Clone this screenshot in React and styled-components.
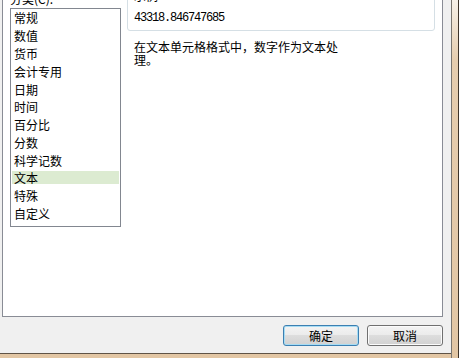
import React, { useState } from 'react'
import styled, { createGlobalStyle } from 'styled-components';

const categories = ['常规', '数值', '货币', '会计专用', '日期', '时间', '百分比', '分数', '科学记数', '文本', '特殊', '自定义'];

function App() {
  const [selected, setSelected] = useState('文本');

  return (
    <Window>
      <GlobalStyle />
      <Main>
        <TabPage>
          <LeftColumn>
            <CategoryLabel>分类(C):</CategoryLabel>
            <ListBox>
              {categories.map((cat) => (
                <Item key={cat} selected={cat === selected} onClick={() => setSelected(cat)}>{cat}</Item>
              ))}
            </ListBox>
          </LeftColumn>
          <RightColumn>
            <SampleBox>
              <SampleLabel>示例</SampleLabel>
              <SampleValue>43318.846747685</SampleValue>
            </SampleBox>
            <Description>在文本单元格格式中，数字作为文本处理。</Description>
          </RightColumn>
        </TabPage>
        <ButtonRow>
          <Button primary>确定</Button>
          <Button>取消</Button>
        </ButtonRow>
      </Main>
      <RightFrame />
      <BottomFrame />
    </Window>
  )
}

const GlobalStyle = createGlobalStyle`
 html, body{
  margin: 0;
  padding: 0;
  background: #f0f0f0;
  overflow: hidden;
 }
 body{
  font-family: "Noto Sans CJK SC", "Liberation Sans", sans-serif;
  font-size: 12px;
  color: #000;
 }
`;

const Window = styled.div`
 width: 459px;
 height: 358px;
 display: grid;
 grid-template-columns: 451px 8px;
 grid-template-rows: 353px 5px;
 overflow: hidden;
`;

const Main = styled.div`
 background: #f0f0f0;
 padding-left: 2px;
 display: flex;
 flex-direction: column;
`;

const TabPage = styled.div`
 box-sizing: border-box;
 width: 441px;
 height: 317px;
 background: #fff;
 border-left: 1px solid #898c95;
 border-right: 1px solid #898c95;
 border-bottom: 1px solid #898c95;
 padding-left: 7px;
 display: flex;
 overflow: hidden;
`;

const LeftColumn = styled.div`
 display: flex;
 flex-direction: column;
`;

const CategoryLabel = styled.div`
 height: 12px;
 line-height: 12px;
 margin-top: -7px;
 margin-bottom: 3px;
`;

const ListBox = styled.div`
 box-sizing: border-box;
 width: 111px;
 height: 219px;
 border: 1px solid #828790;
 display: flex;
 flex-direction: column;
`;

const Item = styled.div`
 height: 13px;
 line-height: 13px;
 padding: 2.4px 0;
 margin: 0 1px;
 text-indent: 2px;
 background: ${(p) => (p.selected ? '#dcebd1' : 'transparent')};
 background-clip: content-box;
 cursor: default;
`;

const RightColumn = styled.div`
 margin-left: 6px;
 display: flex;
 flex-direction: column;
`;

const SampleBox = styled.div`
 box-sizing: border-box;
 width: 308px;
 height: 43px;
 margin-top: -12px;
 padding: 1px 6px 0;
 border: 1px solid #d5dfe5;
 border-radius: 3px;
`;

const SampleLabel = styled.div`
 line-height: 12px;
 height: 12px;
`;

const SampleValue = styled.div`
 margin-top: 10px;
 font-family: "Liberation Mono", monospace;
 font-size: 12px;
 letter-spacing: -1.2px;
 line-height: 12px;
`;

const Description = styled.div`
 width: 210px;
 margin-top: 9px;
 padding-left: 7px;
 line-height: 13px;
`;

const ButtonRow = styled.div`
 display: flex;
 justify-content: flex-end;
 gap: 8px;
 margin-top: 8px;
 padding-right: 8px;
`;

const Button = styled.button`
 box-sizing: border-box;
 width: 76px;
 height: 21px;
 padding: 0;
 font-family: "Noto Sans CJK SC", sans-serif;
 font-size: 12px;
 color: #000;
 border-radius: 3px;
 border: 1px solid ${(p) => (p.primary ? '#3c7fb1' : '#707070')};
 box-shadow: inset 0 0 0 1px ${(p) => (p.primary ? '#a6dcf4' : '#fbfbfb')};
 background: linear-gradient(#f3f3f3, #ebebeb 50%, #dddddd 50%, #d1d1d1);
`;

const RightFrame = styled.div`
 grid-row: 1 / 3;
 grid-column: 2;
 border-left: 1px solid #7a7670;
 border-right: 1px solid #3e342a;
 background: linear-gradient(#f7f1e8, #e6cdae 60px, #e2c6a4);
`;

const BottomFrame = styled.div`
 border-top: 1px solid #5f5346;
 background: #e2c6a4;
`;

export default App
